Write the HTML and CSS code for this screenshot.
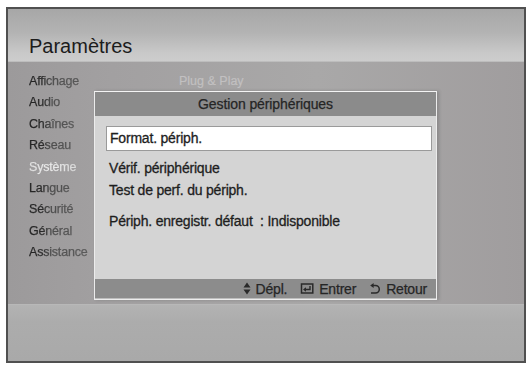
FILE: index.html
```html
<!DOCTYPE html>
<html lang="fr">
<head>
<meta charset="utf-8">
<title>Paramètres</title>
<link rel="stylesheet" href="styles.css">
</head>
<body>
<div class="frame">
  <header class="head">Paramètres</header>
  <div class="middle">
    <ul class="menu">
      <li class="mi">Affichage</li>
      <li class="mi">Audio</li>
      <li class="mi">Chaînes</li>
      <li class="mi">Réseau</li>
      <li class="mi active">Système</li>
      <li class="mi">Langue</li>
      <li class="mi">Sécurité</li>
      <li class="mi">Général</li>
      <li class="mi">Assistance</li>
    </ul>
    <div class="content">
      <div class="sub">Plug &amp; Play</div>
    </div>
    <div class="dialog">
      <div class="d-title">Gestion périphériques</div>
      <div class="d-body">
        <div class="opt selected">Format. périph.</div>
        <div class="opt">Vérif. périphérique</div>
        <div class="opt">Test de perf. du périph.</div>
        <div class="opt info">Périph. enregistr. défaut&nbsp;&nbsp;: Indisponible</div>
      </div>
      <div class="d-foot">
        <span class="key">
          <svg class="ic" width="8" height="13" viewBox="0 0 8 13"><path d="M4 0.5 L7.5 5.5 H0.5 Z M0.5 7.5 H7.5 L4 12.5 Z" fill="#2a2a2a"/></svg>
          Dépl.
        </span>
        <span class="key">
          <svg class="ic" width="14" height="11" viewBox="0 0 14 11"><path d="M1.5 1 H12.8 V10 H1.5 Z" fill="none" stroke="#2a2a2a" stroke-width="1.5"/><path d="M10 3 V6.5 H4.5" fill="none" stroke="#2a2a2a" stroke-width="1.4"/><path d="M3 6.5 L6 4.2 V8.8 Z" fill="#2a2a2a"/></svg>
          Entrer
        </span>
        <span class="key">
          <svg class="ic" width="12" height="12" viewBox="0 0 12 12"><path d="M4 2.5 H6.5 A3.8 3.8 0 0 1 6.5 10.1 H2" fill="none" stroke="#2a2a2a" stroke-width="1.5"/><path d="M1.2 2.5 L4.6 0 V5 Z" fill="#2a2a2a"/></svg>
          Retour
        </span>
      </div>
    </div>
  </div>
  <div class="bottom"></div>
</div>
</body>
</html>
```
FILE: styles.css
```css
* { box-sizing: border-box; }
html, body { margin: 0; padding: 0; background: #fff; }
body { width: 528px; height: 365px; overflow: hidden; }

.frame {
  margin: 7px 0 0 6px;
  width: 520px;
  height: 356px;
  border: 2px solid #505050;
  display: flex;
  flex-direction: column;
  background: #a5a4a4;
}

.head {
  height: 53px;
  flex: none;
  background: linear-gradient(to bottom, #a7a7a7 0%, #b3b3b3 45%, #c9c9c9 85%, #cdcdcd 100%);
  font-family: "Liberation Sans", Arial, sans-serif;
  font-size: 20px;
  color: #1c1c1c;
  padding: 26px 0 0 21px;
  line-height: 22px;
  border-bottom: 1px solid #bdbdbd;
}

.middle {
  position: relative;
  height: 242px;
  flex: none;
  display: flex;
  background: linear-gradient(to right, #9c9a9b 0%, #a2a0a1 20%, #a9a8a8 60%, #a09d9e 100%);
}

.menu {
  list-style: none;
  margin: 0;
  padding: 9px 0 0 21px;
  width: 86px;
  flex: none;
  font-family: "Liberation Sans", Arial, sans-serif;
  font-size: 12.5px;
  line-height: 21.4px;
  -webkit-text-stroke: 0.25px;
  letter-spacing: -0.2px;
}
.mi {
  background: linear-gradient(to right, #222 0px, #2a2a2a 13px, #4d4d4d 22px, #5c5c5c 60px);
  -webkit-background-clip: text;
  background-clip: text;
  color: transparent;
  white-space: nowrap;
}
.mi.active {
  background: linear-gradient(to right, #e0e0e0 0px, #ededed 20px, #d0d0d0 60px);
  -webkit-background-clip: text;
  background-clip: text;
}

.content { flex: 1; padding: 9px 0 0 85px; }
.sub {
  font-family: "Liberation Sans", Arial, sans-serif;
  font-size: 12.5px;
  line-height: 21px;
  color: #c2c0c1;
  -webkit-text-stroke: 0.2px #c2c0c1;
}

.dialog {
  position: absolute;
  left: 86px;
  top: 29px;
  width: 343px;
  height: 209px;
  border: 1px solid #ececec;
  border-top-color: #f4f4f4;
  display: flex;
  flex-direction: column;
  background: #d4d4d4;
  box-shadow: 2px 0 3px rgba(60,60,60,0.25);
  font-family: "Liberation Sans", Arial, sans-serif;
  color: #202020;
}
.d-title {
  height: 24px;
  flex: none;
  background: #8b8b8b;
  text-align: center;
  font-size: 14px;
  line-height: 24px;
  color: #252525;
  -webkit-text-stroke: 0.25px #252525;
  letter-spacing: -0.1px;
}
.d-body {
  flex: 1;
  padding: 10px 4px 0 11px;
  display: flex;
  flex-direction: column;
}
.opt {
  font-size: 14px;
  line-height: 22px;
  padding-left: 3px;
  color: #1e1e1e;
  -webkit-text-stroke: 0.3px #1e1e1e;
  letter-spacing: -0.2px;
  white-space: nowrap;
}
.opt.selected {
  background: #ffffff;
  border: 1px solid #9a9a9a;
  height: 25px;
  line-height: 23px;
  margin-bottom: 6px;
}
.opt.info { margin-top: 9px; }

.d-foot {
  height: 20px;
  flex: none;
  background: #8c8c8c;
  display: flex;
  justify-content: flex-end;
  align-items: center;
  gap: 13px;
  padding-right: 9px;
  font-size: 14px;
  color: #262626;
  -webkit-text-stroke: 0.25px #262626;
  letter-spacing: -0.2px;
  border-bottom: 1px solid #bdbdbd;
}
.key { display: inline-flex; align-items: center; gap: 5px; white-space: nowrap; }
.ic { display: block; }

.bottom {
  flex: 1;
  background: linear-gradient(to bottom, #b3b3b3 0%, #acacac 30%, #a9a9a9 100%);
  border-top: 1px solid #b8b8b8;
}
```
